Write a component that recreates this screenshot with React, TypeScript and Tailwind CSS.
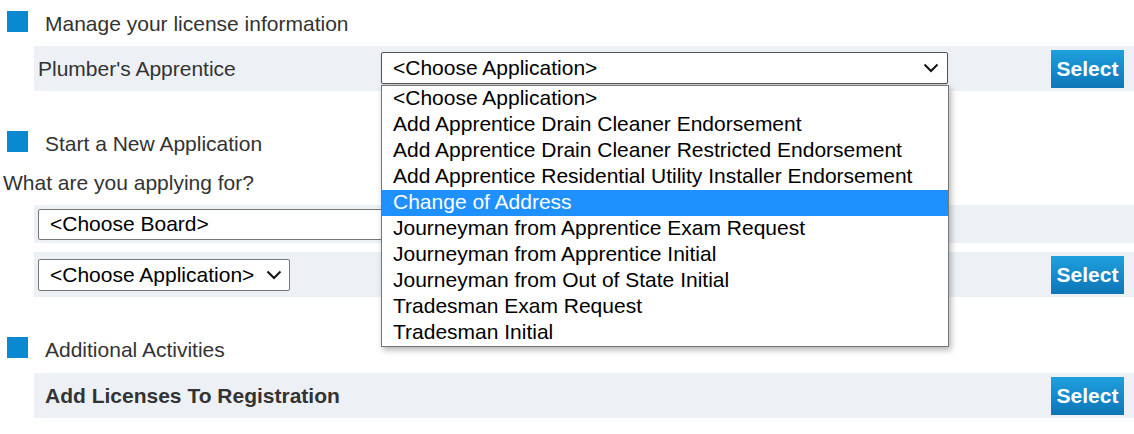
import React from "react";

const options = [
  "<Choose Application>",
  "Add Apprentice Drain Cleaner Endorsement",
  "Add Apprentice Drain Cleaner Restricted Endorsement",
  "Add Apprentice Residential Utility Installer Endorsement",
  "Change of Address",
  "Journeyman from Apprentice Exam Request",
  "Journeyman from Apprentice Initial",
  "Journeyman from Out of State Initial",
  "Tradesman Exam Request",
  "Tradesman Initial",
];

function Chevron() {
  return (
    <svg width="16" height="10" viewBox="0 0 16 10" className="shrink-0">
      <path d="M1.5 1.5 L8 8 L14.5 1.5" fill="none" stroke="#111" strokeWidth="2" />
    </svg>
  );
}

function SectionHeader({ title }: { title: string }) {
  return (
    <div className="flex items-start pl-[7px]">
      <div className="w-[21px] h-[21px] bg-[#0a88d0] shrink-0" />
      <span className="ml-[17px] leading-[26px] text-[#333]">{title}</span>
    </div>
  );
}

function SelectButton() {
  return (
    <button className="ml-auto mr-[10px] h-[38px] w-[73px] bg-gradient-to-b from-[#1fa0de] to-[#0d76b6] text-white font-bold text-[21px] leading-none">
      Select
    </button>
  );
}

export default function App() {
  return (
    <div className="w-[1134px] h-[434px] bg-white overflow-hidden font-['Liberation_Sans',Arial,sans-serif] text-[21px]">
      <div className="pt-[11px]">
        <SectionHeader title="Manage your license information" />
        <div className="ml-[34px] mt-[9px] h-[45px] bg-[#edf0f5] flex items-center">
          <span className="pl-[4px] w-[347px] text-[#333] shrink-0">Plumber's Apprentice</span>
          <div className="relative -mt-[1px]">
            <div className="w-[567px] h-[32px] border border-[#555] rounded-[2px] bg-white flex items-center pl-[11px] pr-[8px] text-black shadow-[0_1px_2px_rgba(0,0,0,0.15)]">
              <span className="flex-1">&lt;Choose Application&gt;</span>
              <Chevron />
            </div>
            <ul className="absolute left-0 top-[33px] w-[568px] border border-[#777] bg-white shadow-[2px_3px_6px_rgba(0,0,0,0.3)] z-10">
              {options.map((o, i) => (
                <li
                  key={o}
                  className={
                    i === 4
                      ? "h-[26px] leading-[24px] pl-[11px] bg-[#1e90ff] text-white"
                      : "h-[26px] leading-[24px] pl-[11px] text-black"
                  }
                >
                  {o}
                </li>
              ))}
            </ul>
          </div>
          <SelectButton />
        </div>
      </div>

      <div className="mt-[40px]">
        <SectionHeader title="Start a New Application" />
        <div className="pl-[3px] mt-[13px] leading-[26px] text-[#333]">What are you applying for?</div>
        <div className="ml-[34px] mt-[9px] h-[38px] bg-[#edf0f5] flex items-center">
          <div className="ml-[4px] w-[600px] h-[31px] border border-[#767676] rounded-[2px] bg-white flex items-center pl-[11px] text-black">
            &lt;Choose Board&gt;
          </div>
        </div>
        <div className="ml-[34px] mt-[9px] h-[45px] bg-[#edf0f5] flex items-center">
          <div className="ml-[4px] w-[252px] h-[32px] border border-[#767676] rounded-[2px] bg-white flex items-center pl-[11px] pr-[7px] text-black">
            <span className="flex-1">&lt;Choose Application&gt;</span>
            <Chevron />
          </div>
          <SelectButton />
        </div>
      </div>

      <div className="mt-[40px]">
        <SectionHeader title="Additional Activities" />
        <div className="ml-[34px] mt-[10px] h-[45px] bg-[#edf0f5] flex items-center">
          <span className="pl-[11px] font-bold text-[#333]">Add Licenses To Registration</span>
          <SelectButton />
        </div>
      </div>
    </div>
  );
}
